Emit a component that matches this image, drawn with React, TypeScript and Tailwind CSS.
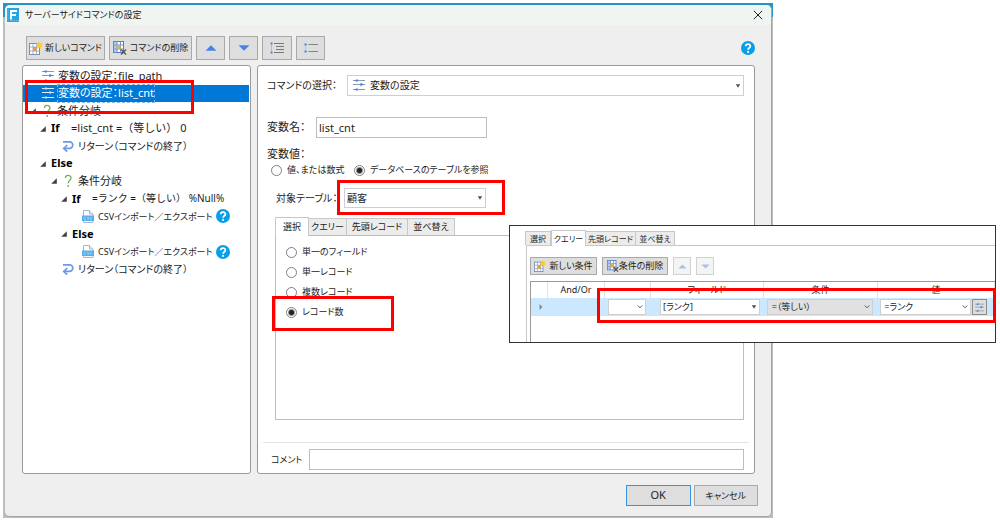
import React from "react";

type IconProps = { className?: string };

function Sliders({ className = "w-3 h-3", light = false }: IconProps & { light?: boolean }) {
  const line = light ? "#e3edf8" : "#8d99a8";
  const dot = light ? "#c5daf4" : "#3f7fe0";
  return (
    <svg viewBox="0 0 12 12" className={className + " shrink-0"} aria-hidden="true">
      <path d="M0 1.500h12M0 5.500h12M0 10.500h12" stroke={line} strokeWidth="1" />
      <path d="M1.500 1.500 4.500 0v3zM10.500 5.500l-3-1.700v3.400zM1.500 10.500l3-1.500v3z" fill={dot} />
    </svg>
  );
}

function NewIcon({ className = "w-[14px] h-[14px]" }: IconProps) {
  return (
    <svg viewBox="0 0 14 14" className={className + " shrink-0"} aria-hidden="true">
      <rect x="0.5" y="2.5" width="10" height="11" fill="#fff" stroke="#7391b5" />
      <path d="M0.5 6h10M0.5 10h10M4 2.5v11M7.5 2.5v11" stroke="#86a3c8" strokeWidth="0.8" />
      <rect x="4" y="6" width="3.6" height="4" fill="#f29b38" />
      <path d="M10 0l.9 2.4L13.5 1.5 12.4 4 14 5.2l-2.2.5.2 2.3-2-1.5L8.2 8l.3-2.3L6.5 5l1.800-1.100L7.300 1.500l2 .8z" fill="#ffc832" />
    </svg>
  );
}

function DeleteIcon({ className = "w-[14px] h-[14px]" }: IconProps) {
  return (
    <svg viewBox="0 0 14 14" className={className + " shrink-0"} aria-hidden="true">
      <rect x="0.5" y="0.5" width="10" height="11" fill="#fff" stroke="#4a80c8" />
      <path d="M0.5 4h10M0.5 8h10M4 0.5v11M7.5 0.5v11" stroke="#5e8fd2" strokeWidth="0.9" />
      <rect x="0.5" y="0.5" width="3.5" height="11" fill="#7ba7e0" opacity="0.6" />
      <rect x="4" y="4" width="3.6" height="4" fill="#f2ab48" />
      <path d="M8 8.5l5 5M13 8.5l-5 5" stroke="#505050" strokeWidth="1.4" />
    </svg>
  );
}

function Triangle({ down = false, pale = false }: { down?: boolean; pale?: boolean }) {
  return (
    <svg viewBox="0 0 12 6" className={pale ? "h-[5px] w-[9px]" : "h-[6px] w-3"} aria-hidden="true">
      <path d={down ? "M0.5 0.3h11L6 5.7z" : "M0.5 5.7h11L6 0.3z"} fill={pale ? "#a9bfee" : "#4a80ea"} />
    </svg>
  );
}

function ListIcon({ full = false }: { full?: boolean }) {
  return (
    <svg viewBox="0 0 14 12" className="h-3 w-[14px]" aria-hidden="true">
      {full ? (
        <>
          <path d="M4 1.500h10M6 4.500h8M6 7.500h8M4 10.500h10" stroke="#777" strokeWidth="1" />
          <path d="M0.5 0.500h2v2h-2zM0.5 9.500h2v2h-2z" fill="#4a80ea" />
          <path d="M1.500 3.500v1M1.500 5.500v1M1.500 7.500v1" stroke="#6b96e8" />
        </>
      ) : (
        <>
          <path d="M4.5 2.500h9.500M4.5 9.5h9.500" stroke="#858585" />
          <path d="M0.5 1.500h2.200v2H0.5zM0.5 8.5h2.200v2H0.5z" fill="#4a80ea" />
          <path d="M1.5 4.500v1M1.5 6.500v1" stroke="#8fb0ee" />
        </>
      )}
    </svg>
  );
}

function Help() {
  return (
    <svg viewBox="0 0 14 14" className="h-[14px] w-[14px] shrink-0" aria-hidden="true">
      <circle cx="7" cy="7" r="7" fill="#069fe8" />
      <path d="M4.7 5.3C4.7 2.4 9.4 2.4 9.4 5.2 9.4 6.8 7.1 6.7 7.1 8.7" fill="none" stroke="#fff" strokeWidth="1.7" />
      <circle cx="7.1" cy="10.9" r="1.05" fill="#fff" />
    </svg>
  );
}

function Question() {
  return (
    <svg viewBox="0 0 12 14" className="h-[14px] w-3 shrink-0" aria-hidden="true">
      <path d="M3.4 4C3.4 0.4 9 0.4 9 3.9 9 6.3 6.2 6.4 6.2 9.3" fill="none" stroke="#78ad5c" strokeWidth="1.3" />
      <circle cx="6.2" cy="12" r="0.95" fill="#78ad5c" />
    </svg>
  );
}

function ReturnIcon() {
  return (
    <svg viewBox="0 0 12 12" className="h-3 w-3 shrink-0" aria-hidden="true">
      <path d="M1 1.8h6.5a3.3 3.3 0 0 1 0 6.6H2.5" fill="none" stroke="#6d97e8" strokeWidth="1.7" />
      <path d="M5.3 5 1.7 8.4l3.6 3.2" fill="none" stroke="#6d97e8" strokeWidth="1.7" />
    </svg>
  );
}

function CsvIcon() {
  return (
    <svg viewBox="0 0 12 13" className="h-[13px] w-3 shrink-0" aria-hidden="true">
      <path d="M1.5 0.5h6l3.5 3.5v8.5H1.5z" fill="#fff" stroke="#a3b8d0" />
      <path d="M7.5 0.5v3.5H11" fill="#e4edf7" stroke="#a3b8d0" />
      <rect x="0" y="5.5" width="12" height="5.5" fill="#58aeea" />
      <path d="M4 7.2H2v2.200h2M7 7.2H5.2v1H7v1.200H5.2M8 7l1 2.400L10 7" fill="none" stroke="#a9d8f8" strokeWidth="0.6" />
    </svg>
  );
}

function Expander({ show }: { show: boolean }) {
  return (
    <svg viewBox="0 0 6 6" className="mr-[5px] h-[6px] w-[6px] shrink-0" aria-hidden="true">
      {show && <path d="M5.8 0.2v5.600H0.2z" fill="#404040" />}
    </svg>
  );
}

function Mark({ className }: { className: string }) {
  return <span aria-hidden="true" className={"pointer-events-none absolute z-20 border-[3px] border-[#fe0000] " + className} />;
}

type Row = {
  pad: string;
  open?: boolean;
  icon?: React.ReactNode;
  key: string;
  label?: string;
  text?: string;
  size?: string;
  help?: boolean;
  selected?: boolean;
};

const rows: Row[] = [
  { key: "a", pad: "pl-[8px]", icon: <Sliders />, text: "変数の設定：file_path" },
  { key: "b", pad: "pl-[8px]", icon: <Sliders light />, text: "変数の設定：list_cnt", selected: true },
  { key: "c", pad: "pl-[7px]", open: true, icon: <Question />, text: "条件分岐" },
  { key: "d", pad: "pl-[17px]", open: true, label: "If", text: "=list_cnt =（等しい） 0", size: "[font-feature-settings:normal]" },
  { key: "e", pad: "pl-[28px]", icon: <ReturnIcon />, text: "リターン（コマンドの終了）", size: "text-[10px]" },
  { key: "f", pad: "pl-[17px]", open: true, label: "Else" },
  { key: "g", pad: "pl-[28px]", open: true, icon: <Question />, text: "条件分岐" },
  { key: "h", pad: "pl-[38px]", open: true, label: "If", text: "=ランク =（等しい） %Null%", size: "text-[10px] [font-feature-settings:normal]" },
  { key: "i", pad: "pl-[48px]", icon: <CsvIcon />, text: "CSVインポート／エクスポート", size: "text-[9px]", help: true },
  { key: "j", pad: "pl-[38px]", open: true, label: "Else" },
  { key: "k", pad: "pl-[48px]", icon: <CsvIcon />, text: "CSVインポート／エクスポート", size: "text-[9px]", help: true },
  { key: "l", pad: "pl-[28px]", icon: <ReturnIcon />, text: "リターン（コマンドの終了）", size: "text-[10px]" },
];

function Tree() {
  return (
    <ul className="grid h-[211px] auto-rows-fr grid-cols-1 text-[11px]">
      {rows.map((r) => (
        <li
          key={r.key}
          className={"relative flex items-center whitespace-pre " + r.pad + (r.selected ? " mr-px bg-[#0078d7] text-white" : "")}
        >
          <Expander show={!!r.open} />
          {r.icon}
          {r.label && <b className="w-5 font-bold text-black">{r.label}</b>}
          {r.text && (
            <span
              className={
                (r.icon ? "ml-1 " : "") + (r.selected ? "outline-1 outline-dashed outline-[#7fb6e6] " : "") + (r.size ?? "")
              }
            >
              {r.text}
            </span>
          )}
          {r.help && (
            <button aria-label="ヘルプ" className="ml-1">
              <Help />
            </button>
          )}
          {r.selected && <Mark className="-top-[5px] left-[2px] h-[34px] w-[169px]" />}
        </li>
      ))}
    </ul>
  );
}

const toolButton = "flex items-center justify-center border border-[#a9a9a9] bg-[#dedede] ";

function Arrow({ chevron = false }: { chevron?: boolean }) {
  return (
    <svg viewBox="0 0 6 4" className="pointer-events-none absolute right-[3px] top-1/2 h-1 w-[6px] -translate-y-1/2" aria-hidden="true">
      {chevron ? <path d="M0.8 0.5 3 2.8 5.2 0.5" fill="none" stroke="#555" /> : <path d="M0.8 0.3h4.400L3 3.7z" fill="#505050" />}
    </svg>
  );
}

function Combo({
  value,
  label,
  className,
  selectClass,
  chevron,
  id,
  children,
}: {
  value: string;
  label?: string;
  id?: string;
  className: string;
  selectClass: string;
  chevron?: boolean;
  children?: React.ReactNode;
}) {
  return (
    <div className={"relative " + className}>
      <select id={id} aria-label={label} className={"block h-full w-full appearance-none border border-[#cfcfcf] " + selectClass}>
        <option>{value}</option>
      </select>
      <Arrow chevron={chevron} />
      {children}
    </div>
  );
}

function Radio({ name, text, checked, className = "" }: { name: string; text: string; checked?: boolean; className?: string }) {
  return (
    <label className={"flex items-center gap-[5px] text-[9px] " + className}>
      <input
        type="radio"
        name={name}
        defaultChecked={checked}
        className="h-[11px] w-[11px] shrink-0 appearance-none rounded-full border border-[#808080] bg-white checked:bg-[radial-gradient(circle,#222_2px,#fff_4px)]"
      />
      {text}
    </label>
  );
}

function Tabs({ active, small = false }: { active: number; small?: boolean }) {
  const names = ["選択", "クエリー", "先頭レコード", "並べ替え"];
  const widths = small ? ["w-[26px]", "w-[35px]", "w-[51px]", "w-[40px]"] : ["w-[34px]", "w-[39px]", "w-[62px]", "w-[48px]"];
  return (
    <div role="tablist" className={"flex items-end " + (small ? "h-4 text-[8px]" : "h-[19px] text-[9px]")}>
      {names.map((n, i) => (
        <button
          key={n}
          role="tab"
          aria-selected={i === active}
          className={
            "flex shrink-0 items-center justify-center whitespace-nowrap border border-b-0 border-[#c8c8c8] " +
            widths[i] +
            (i === active ? " relative z-10 -mb-px h-full bg-white" : " -ml-px bg-[#ececec] " + (small ? "h-[14px]" : "h-[17px]"))
          }
        >
          {n}
        </button>
      ))}
    </div>
  );
}

function Detail() {
  return (
    <section className="flex min-w-0 flex-1 flex-col rounded-[3px] border border-[#999] bg-white pt-[9px] text-[11px]">
      <div className="mr-[10px] flex h-[21px] items-center pl-[9px]">
        <label htmlFor="command" className="w-[80px] shrink-0 whitespace-nowrap text-[10px]">
          コマンドの選択：
        </label>
        <Combo id="command" value="変数の設定" className="h-full flex-1" selectClass="bg-white pl-[22px] text-[10px]">
          <Sliders className="pointer-events-none absolute left-[6px] top-1 h-3 w-3" />
        </Combo>
      </div>
      <div className="mt-[21px] flex h-[21px] items-center pl-[9px]">
        <label htmlFor="variable" className="w-[49px] shrink-0 whitespace-nowrap">
          変数名：
        </label>
        <input id="variable" defaultValue="list_cnt" className="h-full w-[171px] border border-[#bdbdbd] px-[2px]" />
      </div>
      <fieldset className="mt-2 pl-[9px]">
        <legend className="h-4 leading-4">変数値：</legend>
        <div className="flex h-[16px] items-center gap-[5px] whitespace-nowrap pl-1">
          <Radio name="source" text="値、または数式" className="w-[78px]" />
          <Radio name="source" text="データベースのテーブルを参照" checked />
        </div>
      </fieldset>
      <div className="mt-[10px] flex h-[20px] items-center pl-[18px]">
        <label htmlFor="table" className="w-[68px] shrink-0 whitespace-nowrap text-[10px]">
          対象テーブル：
        </label>
        <Combo id="table" value="顧客" className="h-full w-[142px]" selectClass="bg-white pl-[2px] text-[10px]">
          <Mark className="-left-[7px] -top-2 h-[35px] w-[168px]" />
        </Combo>
      </div>
      <div className="ml-[17px] mr-[10px] mt-2">
        <Tabs active={0} />
        <div className="flex h-[185px] flex-col gap-[2px] border border-[#bdbdbd] pl-[10px] pt-[7px]">
          <Radio name="kind" text="単一のフィールド" className="h-[18px]" />
          <Radio name="kind" text="単一レコード" className="h-[18px]" />
          <Radio name="kind" text="複数レコード" className="h-[18px]" />
          <div className="relative">
            <Radio name="kind" text="レコード数" checked className="h-[18px]" />
            <Mark className="-left-[14px] -top-[7px] h-[35px] w-[122px]" />
          </div>
        </div>
      </div>
      <hr className="mx-[5px] mt-[22px] border-[#e3e3e3]" />
      <div className="mb-[2px] mr-[10px] mt-[6px] flex h-[21px] items-center pl-[13px]">
        <label htmlFor="comment" className="w-[38px] shrink-0 whitespace-nowrap text-[9px]">
          コメント
        </label>
        <input id="comment" className="h-full min-w-0 flex-1 border border-[#bdbdbd] px-1" />
      </div>
    </section>
  );
}

function QueryPanel() {
  const th = "border-r border-[#e3e3e3] p-0 text-center font-normal";
  return (
    <section className="absolute left-[50.9%] top-[225px] z-30 w-[48.7%] border border-[#333] bg-white pl-4 pt-[3px] text-[9px]">
      <Tabs active={1} small />
      <div className="border-l border-t border-[#c8c8c8] pl-[3px] pt-[11px]">
        <div className="flex h-[18px] items-stretch gap-[5px]">
          <button className={toolButton + "w-[67px] gap-[3px] whitespace-nowrap"}>
            <NewIcon className="h-3 w-3" />
            新しい条件
          </button>
          <button className={toolButton + "w-[66px] whitespace-nowrap"}>
            <DeleteIcon className="h-3 w-3" />
            条件の削除
          </button>
          <button aria-label="上へ" className="flex w-[18px] items-center justify-center border border-[#d2d2d2] bg-[#f4f4f4]">
            <Triangle pale />
          </button>
          <button aria-label="下へ" className="flex w-[18px] items-center justify-center border border-[#d2d2d2] bg-[#f4f4f4]">
            <Triangle down pale />
          </button>
        </div>
        <div className="relative mt-[6px] h-[61px] border-l border-t border-[#999]">
          <table className="w-full table-fixed border-collapse">
            <colgroup>
              <col className="w-[3.5%]" />
              <col className="w-[12.4%]" />
              <col className="w-[9.8%]" />
              <col className="w-[24.5%]" />
              <col className="w-[24.5%]" />
              <col />
            </colgroup>
            <thead>
              <tr className="h-4">
                <th className={th} />
                <th className={th}>And/Or</th>
                <th className={th} />
                <th className={th}>フィールド</th>
                <th className={th}>条件</th>
                <th className={th}>値</th>
              </tr>
            </thead>
            <tbody>
              <tr className="h-[18px] bg-[#cce8ff]">
                <td className="p-0">
                  <svg viewBox="0 0 4 6" className="ml-2 h-[6px] w-1" aria-hidden="true">
                    <path d="M0.5 0 3.5 3 0.5 6z" fill="#7c8c9d" />
                  </svg>
                </td>
                <td className="p-0" />
                <td className="p-0 pl-[3px]">
                  <Combo value="" label="And/Or" chevron className="h-4 w-[38px]" selectClass="bg-white" />
                </td>
                <td className="p-0 pl-[10px] pr-1">
                  <Combo value="[ランク]" label="フィールド" className="h-4" selectClass="bg-white pl-[2px]" />
                </td>
                <td className="p-0 pl-[3px] pr-1">
                  <Combo value="=（等しい）" label="条件" chevron className="h-4" selectClass="bg-[#e1e1e1] pl-1" />
                </td>
                <td className="p-0 pl-[3px] pr-2">
                  <div className="flex h-4 gap-px">
                    <Combo value="=ランク" label="値" chevron className="flex-1" selectClass="bg-white pl-[3px]" />
                    <button aria-label="値の設定" className="flex w-[15px] items-center justify-center border border-[#8a8a8a] bg-[#dedede]">
                      <Sliders className="h-[9px] w-[9px]" />
                    </button>
                  </div>
                </td>
              </tr>
            </tbody>
          </table>
          <Mark className="-right-px left-[66px] top-[6px] h-[35px]" />
        </div>
      </div>
    </section>
  );
}

export default function App() {
  return (
    <div className="relative bg-white pl-[3px] pt-[3px] text-[#1c1c1c] [font-family:'Noto_Sans','Noto_Sans_CJK_JP',sans-serif] [font-feature-settings:'palt']">
      <div className="w-[77.2%] bg-[linear-gradient(#2396c4_14px,#bdbdbd_14px)] pb-px pl-[2px] pr-px pt-[2px]">
        <main className="rounded-[5px] border-b border-r border-[#a5a5a5] bg-[#efefef]">
          <header className="flex h-5 items-center rounded-t-[5px] bg-[#f1f5f1] pl-[2px] pr-2">
            <svg viewBox="0 0 12 14" className="h-[14px] w-3" aria-hidden="true">
              <rect width="12" height="14" fill="#27a4e4" />
              <path d="M4 11.5V3h6M4 7h5" fill="none" stroke="#fff" strokeWidth="2" />
              <path d="M1 1v12M3 12.5h9" stroke="#8bd0f3" strokeWidth="0.8" strokeDasharray="1 1" />
            </svg>
            <h1 className="ml-[6px] flex-1 text-[9px]">サーバーサイドコマンドの設定</h1>
            <button aria-label="閉じる">
              <svg viewBox="0 0 10 10" className="h-[10px] w-[10px]" aria-hidden="true">
                <path d="M0.8 0.8l8.400 8.400M9.2 0.8L0.8 9.2" stroke="#222" strokeWidth="1" />
              </svg>
            </button>
          </header>
          <div className="flex h-[35px] items-start gap-1 pl-[21px] pr-4 pt-[11px] text-[9px]">
            <button className={toolButton + "h-6 w-[79px] shrink-0 gap-[2px] whitespace-nowrap"}>
              <NewIcon />
              新しいコマンド
            </button>
            <button className={toolButton + "h-6 w-[83px] shrink-0 gap-[3px] whitespace-nowrap"}>
              <DeleteIcon />
              コマンドの削除
            </button>
            <button aria-label="上へ" className={toolButton + "h-6 w-[29px]"}>
              <Triangle />
            </button>
            <button aria-label="下へ" className={toolButton + "h-6 w-[29px]"}>
              <Triangle down />
            </button>
            <button aria-label="インデント" className={toolButton + "h-6 w-[30px]"}>
              <ListIcon full />
            </button>
            <button aria-label="リスト" className={toolButton + "h-6 w-[29px]"}>
              <ListIcon />
            </button>
            <button aria-label="ヘルプ" className="ml-auto mt-[5px]">
              <Help />
            </button>
          </div>
          <div className="mt-[5px] flex min-h-[409px] gap-[6px] pl-[17px] pr-4">
            <nav className="w-[229px] shrink-0 rounded-[3px] border border-[#999] bg-white pt-px">
              <Tree />
            </nav>
            <Detail />
          </div>
          <footer className="flex justify-end gap-[3px] pb-[10px] pr-[13px] pt-[11px]">
            <button className="h-[21px] w-[65px] border border-[#3a91dc] bg-[#dedede] text-[11px]">OK</button>
            <button className="h-[21px] w-[64px] whitespace-nowrap border border-[#a9a9a9] bg-[#dedede] text-[9px]">キャンセル</button>
          </footer>
        </main>
      </div>
      <QueryPanel />
    </div>
  );
}
